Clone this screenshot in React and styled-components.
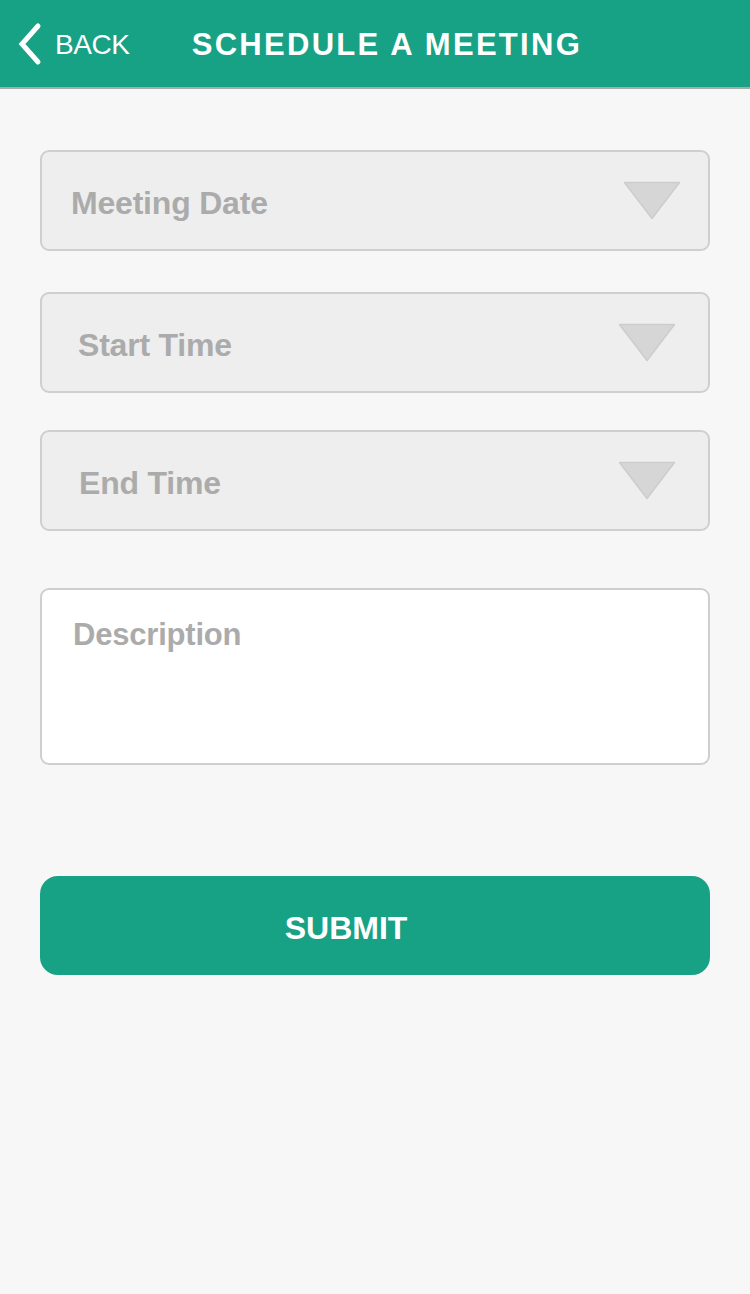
import styled, { createGlobalStyle } from 'styled-components'

const GlobalStyle = createGlobalStyle`
  html, body {
    margin: 0;
    padding: 0;
    background: #f7f7f7;
    font-family: "Liberation Sans", Arial, Helvetica, sans-serif;
  }
`

function Chevron() {
  return (
    <svg width="30" height="44" viewBox="0 0 30 44">
      <polyline points="22,4 6,22 22,40" fill="none" stroke="#ffffff" strokeWidth="5" strokeLinecap="round" strokeLinejoin="miter" />
    </svg>
  )
}

function Caret() {
  return (
    <svg width="58" height="39" viewBox="0 0 58 39">
      <polygon points="1.5,1.5 56.5,1.5 29,37.5" fill="#d6d6d6" stroke="#cdcdcd" strokeWidth="1.5" strokeLinejoin="round" />
    </svg>
  )
}

const fields = [
  { label: 'Meeting Date', mt: 61, pl: 29, pr: 27 },
  { label: 'Start Time', mt: 41, pl: 36, pr: 32 },
  { label: 'End Time', mt: 37, pl: 37, pr: 32 },
]

export default function App() {
  return (
    <Page>
      <GlobalStyle />
      <Header>
        <BackButton>
          <Chevron />
          <BackLabel>BACK</BackLabel>
        </BackButton>
        <Title>SCHEDULE A MEETING</Title>
      </Header>

      <Form>
        {fields.map(f => (
          <Select key={f.label} $mt={f.mt} $pl={f.pl} $pr={f.pr}>
            <Placeholder>{f.label}</Placeholder>
            <Caret />
          </Select>
        ))}

        <TextArea placeholder="Description" />

        <SubmitButton type="button">SUBMIT</SubmitButton>
      </Form>
    </Page>
  )
}

const Page = styled.div`
  min-height: 1294px;
  background: #f7f7f7;
`

const Header = styled.header`
  display: flex;
  align-items: center;
  height: 87px;
  background: #17a185;
  border-bottom: 2px solid #aaaaaa;
  padding-left: 16px;
`

const BackButton = styled.div`
  display: flex;
  align-items: center;
  gap: 9px;
  color: #ffffff;
  margin-top: 1px;
`

const BackLabel = styled.span`
  font-size: 28px;
  letter-spacing: -0.4px;
  line-height: 1;
  margin-top: 2px;
`

const Title = styled.h1`
  margin: 2px 0 0 62px;
  color: #ffffff;
  font-size: 31px;
  font-weight: 700;
  letter-spacing: 2.3px;
  line-height: 1;
`

const Form = styled.div`
  display: flex;
  flex-direction: column;
  padding: 0 40px;
`

const Select = styled.div`
  display: flex;
  align-items: center;
  justify-content: space-between;
  box-sizing: border-box;
  height: 101px;
  margin-top: ${p => p.$mt}px;
  padding-left: ${p => p.$pl}px;
  padding-right: ${p => p.$pr}px;
  background: #eeeeee;
  border: 2px solid #cfcfcf;
  border-radius: 9px;
`

const Placeholder = styled.span`
  font-size: 32px;
  font-weight: 700;
  color: #ababab;
  letter-spacing: -0.2px;
  margin-top: 5px;
`

const TextArea = styled.textarea`
  box-sizing: border-box;
  height: 177px;
  margin-top: 57px;
  padding: 26px 31px;
  background: #ffffff;
  border: 2px solid #cfcfcf;
  border-radius: 9px;
  resize: none;
  outline: none;
  font-family: "Liberation Sans", Arial, Helvetica, sans-serif;
  font-size: 31px;
  font-weight: 700;
  line-height: 1.2;
  color: #555;

  &::placeholder {
    color: #ababab;
    letter-spacing: -0.2px;
  }
`

const SubmitButton = styled.button`
  height: 99px;
  margin-top: 111px;
  padding: 6px 58px 0 0;
  border: none;
  border-radius: 18px;
  background: #17a185;
  color: #ffffff;
  font-family: "Liberation Sans", Arial, Helvetica, sans-serif;
  font-size: 32px;
  font-weight: 700;
  cursor: pointer;
`
